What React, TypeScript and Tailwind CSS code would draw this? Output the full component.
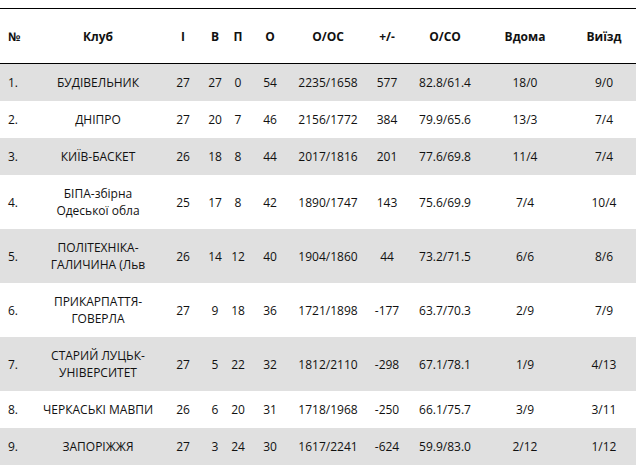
const headers = ['№', 'Клуб', 'І', 'В', 'П', 'О', 'О/ОС', '+/-', 'О/СО', 'Вдома', 'Виїзд']

const colWidths = [30, 136, 34, 30, 16, 48, 68, 50, 66, 94, 64]

const rows: string[][] = [
  ['1.', 'БУДІВЕЛЬНИК', '27', '27', '0', '54', '2235/1658', '577', '82.8/61.4', '18/0', '9/0'],
  ['2.', 'ДНІПРО', '27', '20', '7', '46', '2156/1772', '384', '79.9/65.6', '13/3', '7/4'],
  ['3.', 'КИЇВ-БАСКЕТ', '26', '18', '8', '44', '2017/1816', '201', '77.6/69.8', '11/4', '7/4'],
  ['4.', 'БІПА-збірна Одеської обла', '25', '17', '8', '42', '1890/1747', '143', '75.6/69.9', '7/4', '10/4'],
  ['5.', 'ПОЛІТЕХНІКА-ГАЛИЧИНА (Льв', '26', '14', '12', '40', '1904/1860', '44', '73.2/71.5', '6/6', '8/6'],
  ['6.', 'ПРИКАРПАТТЯ-ГОВЕРЛА', '27', '9', '18', '36', '1721/1898', '-177', '63.7/70.3', '2/9', '7/9'],
  ['7.', 'СТАРИЙ ЛУЦЬК-УНІВЕРСИТЕТ', '27', '5', '22', '32', '1812/2110', '-298', '67.1/78.1', '1/9', '4/13'],
  ['8.', 'ЧЕРКАСЬКІ МАВПИ', '26', '6', '20', '31', '1718/1968', '-250', '66.1/75.7', '3/9', '3/11'],
  ['9.', 'ЗАПОРІЖЖЯ', '27', '3', '24', '30', '1617/2241', '-624', '59.9/83.0', '2/12', '1/12'],
]

const cellAlign = (i: number) => {
  if (i === 0) return 'text-left pl-2'
  if (i === 1) return 'text-center px-[10px]'
  return 'text-center'
}

const App = () => {
  return (
    <div className="pt-2 bg-white min-h-[475px] font-['Open_Sans',sans-serif] text-[12px] text-[#111]">
      <table className="w-[636px] table-fixed border-separate border-spacing-0">
        <colgroup>
          {colWidths.map((w, i) => (
            <col key={i} style={{ width: w }} />
          ))}
        </colgroup>
        <thead>
          <tr>
            {headers.map((h, i) => (
              <th
                key={h}
                className={`border-t border-b border-black pt-[19px] pb-[18px] leading-[17px] font-bold ${cellAlign(i)}`}
              >
                {h}
              </th>
            ))}
          </tr>
        </thead>
        <tbody>
          {rows.map((row, r) => (
            <tr key={r} className={r % 2 === 0 ? 'bg-[#e0e0e0]' : 'bg-white'}>
              {row.map((cell, i) => (
                <td key={i} className={`py-[10px] leading-[17px] align-middle ${cellAlign(i)}`}>
                  {cell}
                </td>
              ))}
            </tr>
          ))}
        </tbody>
      </table>
    </div>
  )
}

export default App
